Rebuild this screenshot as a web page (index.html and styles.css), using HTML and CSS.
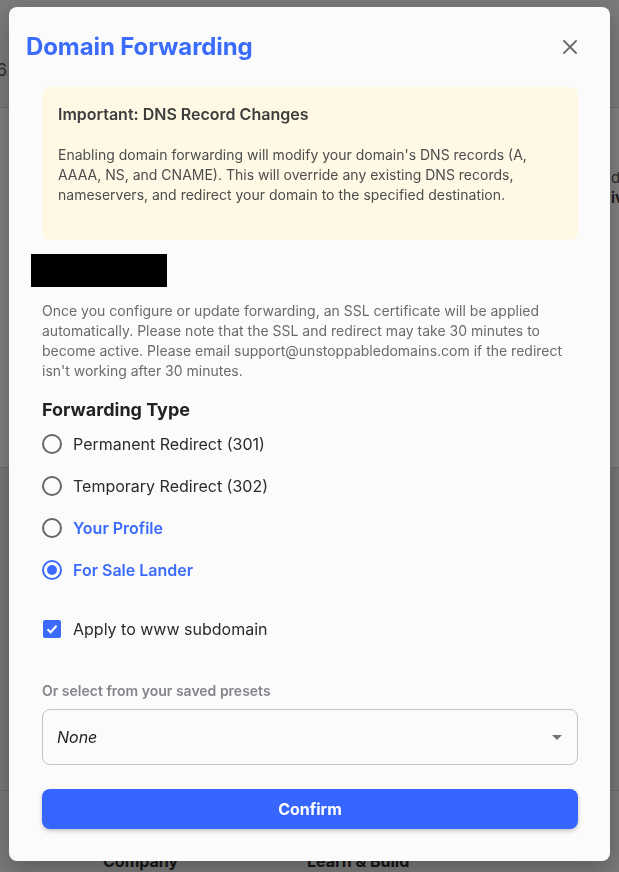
FILE: index.html
```html
<!DOCTYPE html>
<html lang="en">
<head>
<meta charset="utf-8">
<title>Domain Forwarding</title>
<link rel="stylesheet" href="styles.css">
</head>
<body>
<div class="page">
  <div class="bg-hdr">
    <div class="edge-left"><span>16</span></div>
  </div>
  <div class="bg-sec1">
    <div class="edge-right">
      <span class="er1">d</span>
      <span class="er2">iv</span>
    </div>
  </div>
  <div class="bg-sec2"></div>
  <div class="bg-foot">
    <span class="foot-col">Company</span>
    <span class="foot-col">Learn &amp; Build</span>
  </div>
</div>

<div class="modal" role="dialog" aria-labelledby="dlg-title">
  <div class="mhead">
    <h2 id="dlg-title" class="mtitle">Domain Forwarding</h2>
    <button class="close" aria-label="Close">
      <svg width="14" height="14" viewBox="0 0 14 14"><path d="M1 1 L13 13 M13 1 L1 13" stroke="#666" stroke-width="1.8" fill="none" stroke-linecap="square"/></svg>
    </button>
  </div>
  <div class="mbody">
    <div class="alert">
      <div class="alert-title">Important: DNS Record Changes</div>
      <p class="alert-text">Enabling domain forwarding will modify your domain's DNS records (A, AAAA, NS, and CNAME). This will override any existing DNS records, nameservers, and redirect your domain to the specified destination.</p>
    </div>
    <div class="redacted"></div>
    <p class="note">Once you configure or update forwarding, an SSL certificate will be applied automatically. Please note that the SSL and redirect may take 30 minutes to become active. Please email support@unstoppabledomains.com if the redirect isn't working after 30 minutes.</p>
    <h3 class="section">Forwarding Type</h3>
    <div class="radios">
      <div class="opt"><span class="radio"></span><span class="lbl">Permanent Redirect (301)</span></div>
      <div class="opt"><span class="radio"></span><span class="lbl">Temporary Redirect (302)</span></div>
      <div class="opt"><span class="radio"></span><span class="lbl blue">Your Profile</span></div>
      <div class="opt"><span class="radio on"></span><span class="lbl blue">For Sale Lander</span></div>
    </div>
    <div class="opt chk-row">
      <span class="checkbox">
        <svg width="14" height="14" viewBox="0 0 14 14"><path d="M2.5 7.2 L5.6 10.2 L11.6 3.8" stroke="#fff" stroke-width="2" fill="none"/></svg>
      </span>
      <span class="lbl">Apply to www subdomain</span>
    </div>
    <div class="preset-label">Or select from your saved presets</div>
    <div class="select">
      <span class="sel-val">None</span>
      <span class="caret"></span>
    </div>
    <button class="confirm">Confirm</button>
  </div>
</div>
</body>
</html>
```

FILE: styles.css
```css
* { box-sizing: border-box; }
html, body { margin: 0; padding: 0; }
body {
  width: 619px;
  height: 872px;
  overflow: hidden;
  font-family: Inter, "Noto Sans", sans-serif;
  background: #7a7a7a;
}

/* dimmed page behind the dialog */
.page {
  height: 872px;
  display: flex;
  flex-direction: column;
  overflow: hidden;
}
.bg-hdr {
  height: 108px;
  background: #7b7b7b;
  border-bottom: 1px solid #6c6c6c;
  display: flex;
  align-items: flex-start;
  padding-top: 59px;
}
.edge-left {
  width: 7px;
  overflow: hidden;
  direction: rtl;
  font-size: 17px;
  color: #2f2f2f;
  line-height: 22px;
}
.bg-sec1 {
  height: 362px;
  background: #808080;
  border-bottom: 1px solid #6c6c6c;
  display: flex;
  justify-content: flex-end;
  padding-top: 60px;
}
.edge-right {
  width: 8px;
  overflow: hidden;
  display: flex;
  flex-direction: column;
  white-space: nowrap;
  color: #2a2a2a;
  font-size: 15px;
  line-height: 20px;
}
.er2 { font-weight: 700; color: #1c1c1c; }
.bg-sec2 {
  height: 325px;
  background: #777777;
  border-bottom: 1px solid #6c6c6c;
}
.bg-foot {
  flex: 1;
  background: #7a7a7a;
  display: flex;
  padding-top: 59px;
  padding-left: 103px;
}
.foot-col {
  width: 204px;
  font-size: 16px;
  font-weight: 700;
  color: #161616;
  line-height: 22px;
}

/* dialog */
.modal {
  position: fixed;
  top: 7px;
  left: 9px;
  width: 601px;
  height: 854px;
  background: #fbfbfb;
  border-radius: 8px;
  box-shadow: 0 8px 24px rgba(0,0,0,0.25);
  display: flex;
  flex-direction: column;
}
.mhead {
  display: flex;
  align-items: center;
  justify-content: space-between;
  padding: 24px 28px 0 17px;
}
.mtitle {
  margin: 0;
  font-size: 24px;
  line-height: 32px;
  font-weight: 700;
  color: #3b6bfb;
  letter-spacing: -0.1px;
}
.close {
  width: 24px;
  height: 24px;
  border: 0;
  background: none;
  padding: 0;
  display: flex;
  align-items: center;
  justify-content: center;
  cursor: pointer;
}
.mbody {
  padding: 0 32px 32px 33px;
  display: flex;
  flex-direction: column;
}
.alert {
  margin-top: 24px;
  height: 153px;
  background: #fef8e4;
  border-radius: 8px;
  padding: 15px 16px 16px 16px;
}
.alert-title {
  font-size: 16px;
  line-height: 24px;
  font-weight: 600;
  color: #3d3d3d;
}
.alert-text {
  margin: 19px 0 0;
  font-size: 14px;
  line-height: 20px;
  color: #4d4d4d;
}
.redacted {
  margin-top: 14px;
  margin-left: -11px;
  width: 136px;
  height: 33px;
  background: #000;
}
.note {
  margin: 14px 0 0;
  font-size: 14px;
  line-height: 20px;
  color: #6b6b6b;
}
.section {
  margin: 17px 0 0;
  font-size: 18px;
  line-height: 24px;
  font-weight: 700;
  color: #222;
}
.radios {
  margin-top: 1px;
  display: flex;
  flex-direction: column;
}
.opt {
  height: 42px;
  display: flex;
  align-items: center;
  gap: 11px;
}
.radio {
  width: 20px;
  height: 20px;
  border: 2px solid #666;
  border-radius: 50%;
  display: flex;
  align-items: center;
  justify-content: center;
  flex: none;
}
.radio.on { border-color: #3b6bfb; }
.radio.on::after {
  content: "";
  width: 10px;
  height: 10px;
  border-radius: 50%;
  background: #3b6bfb;
}
.lbl {
  font-size: 16px;
  line-height: 24px;
  color: #2b2b2b;
}
.lbl.blue { color: #3b6bfb; font-weight: 600; }
.chk-row { margin-top: 17px; }
.checkbox {
  width: 18px;
  height: 18px;
  margin: 0 1px 0 1px;
  border-radius: 2px;
  background: #3b6bfb;
  display: flex;
  align-items: center;
  justify-content: center;
  flex: none;
}
.preset-label {
  margin-top: 31px;
  font-size: 14px;
  line-height: 20px;
  font-weight: 600;
  color: #85858c;
}
.select {
  margin-top: 8px;
  height: 56px;
  border: 1px solid #c4c4c4;
  border-radius: 8px;
  display: flex;
  align-items: center;
  justify-content: space-between;
  padding: 0 15px 0 14px;
}
.sel-val {
  font-size: 16px;
  font-style: italic;
  color: #1f1f1f;
}
.caret {
  width: 0;
  height: 0;
  border-left: 5px solid transparent;
  border-right: 5px solid transparent;
  border-top: 5px solid #757575;
}
.confirm {
  margin-top: 24px;
  height: 40px;
  border: 0;
  border-radius: 8px;
  background: #3766fe;
  color: #fff;
  font-family: Inter, "Noto Sans", sans-serif;
  font-size: 16px;
  font-weight: 700;
  box-shadow: 0 2px 4px rgba(0,0,0,0.22);
  cursor: pointer;
}
```
